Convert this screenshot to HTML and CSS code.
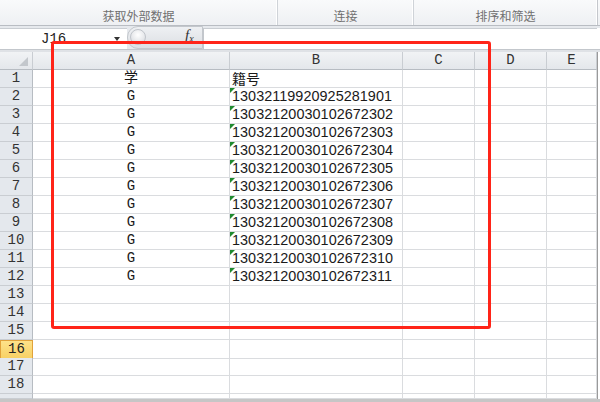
FILE: index.html
```html
<!DOCTYPE html>
<html lang="zh">
<head>
<meta charset="utf-8">
<link rel="stylesheet" href="styles.css">
</head>
<body>
<div class="app">
  <div class="ribbon">
    <div class="group g1">获取外部数据</div>
    <div class="group g2">连接</div>
    <div class="group g3">排序和筛选</div>
    <div class="group g4"></div>
  </div>
  <div class="fbar">
    <div class="namebox"><span class="ref">J16</span><span class="arrow"></span></div>
    <div class="pill"><span class="knob"></span><span class="fx">f<sub>x</sub></span></div>
    <div class="input"></div>
    <div class="fend"></div>
  </div>
  <div class="sep"></div>
  <div class="sheet">
    <div class="row head"><div class="c rh corner"><span class="tri"></span></div><div class="c ch">A</div><div class="c ch">B</div><div class="c ch">C</div><div class="c ch">D</div><div class="c ch">E</div><div class="c edge"></div></div>
    <div class="row"><div class="c rh">1</div><div class="c a">学</div><div class="c b cjk">籍号</div><div class="c"></div><div class="c"></div><div class="c"></div><div class="c edge"></div></div>
    <div class="row"><div class="c rh">2</div><div class="c a">G</div><div class="c b num">13032119920925281901</div><div class="c"></div><div class="c"></div><div class="c"></div><div class="c edge"></div></div>
    <div class="row"><div class="c rh">3</div><div class="c a">G</div><div class="c b num">13032120030102672302</div><div class="c"></div><div class="c"></div><div class="c"></div><div class="c edge"></div></div>
    <div class="row"><div class="c rh">4</div><div class="c a">G</div><div class="c b num">13032120030102672303</div><div class="c"></div><div class="c"></div><div class="c"></div><div class="c edge"></div></div>
    <div class="row"><div class="c rh">5</div><div class="c a">G</div><div class="c b num">13032120030102672304</div><div class="c"></div><div class="c"></div><div class="c"></div><div class="c edge"></div></div>
    <div class="row"><div class="c rh">6</div><div class="c a">G</div><div class="c b num">13032120030102672305</div><div class="c"></div><div class="c"></div><div class="c"></div><div class="c edge"></div></div>
    <div class="row"><div class="c rh">7</div><div class="c a">G</div><div class="c b num">13032120030102672306</div><div class="c"></div><div class="c"></div><div class="c"></div><div class="c edge"></div></div>
    <div class="row"><div class="c rh">8</div><div class="c a">G</div><div class="c b num">13032120030102672307</div><div class="c"></div><div class="c"></div><div class="c"></div><div class="c edge"></div></div>
    <div class="row"><div class="c rh">9</div><div class="c a">G</div><div class="c b num">13032120030102672308</div><div class="c"></div><div class="c"></div><div class="c"></div><div class="c edge"></div></div>
    <div class="row"><div class="c rh">10</div><div class="c a">G</div><div class="c b num">13032120030102672309</div><div class="c"></div><div class="c"></div><div class="c"></div><div class="c edge"></div></div>
    <div class="row"><div class="c rh">11</div><div class="c a">G</div><div class="c b num">13032120030102672310</div><div class="c"></div><div class="c"></div><div class="c"></div><div class="c edge"></div></div>
    <div class="row"><div class="c rh">12</div><div class="c a">G</div><div class="c b num">13032120030102672311</div><div class="c"></div><div class="c"></div><div class="c"></div><div class="c edge"></div></div>
    <div class="row"><div class="c rh">13</div><div class="c"></div><div class="c"></div><div class="c"></div><div class="c"></div><div class="c"></div><div class="c edge"></div></div>
    <div class="row"><div class="c rh">14</div><div class="c"></div><div class="c"></div><div class="c"></div><div class="c"></div><div class="c"></div><div class="c edge"></div></div>
    <div class="row"><div class="c rh">15</div><div class="c"></div><div class="c"></div><div class="c"></div><div class="c"></div><div class="c"></div><div class="c edge"></div></div>
    <div class="row"><div class="c rh sel">16</div><div class="c"></div><div class="c"></div><div class="c"></div><div class="c"></div><div class="c"></div><div class="c edge"></div></div>
    <div class="row"><div class="c rh">17</div><div class="c"></div><div class="c"></div><div class="c"></div><div class="c"></div><div class="c"></div><div class="c edge"></div></div>
    <div class="row"><div class="c rh">18</div><div class="c"></div><div class="c"></div><div class="c"></div><div class="c"></div><div class="c"></div><div class="c edge"></div></div>
    <div class="row part"><div class="c rh"></div><div class="c"></div><div class="c"></div><div class="c"></div><div class="c"></div><div class="c"></div><div class="c edge"></div></div>
  </div>
  <div class="bottombar"></div>
  <div class="highlight"></div>
</div>
</body>
</html>
```

FILE: styles.css
```css
* { box-sizing: border-box; }
html, body { margin: 0; padding: 0; background: #ffffff; }
body { width: 600px; height: 402px; overflow: hidden; font-family: "Liberation Sans", "Noto Sans CJK SC", sans-serif; }
.app { position: relative; width: 600px; height: 402px; display: flex; flex-direction: column; }

.ribbon { height: 26px; display: flex; background: linear-gradient(#f9fafb, #eef0f3); border-bottom: 1px solid #b9bdc3; }
.group { display: flex; align-items: center; justify-content: center; font-family: "Noto Sans CJK SC", sans-serif; font-size: 12px; color: #707070; border-right: 1px solid #cfd3d8; box-shadow: inset -1px 0 0 #ffffff; padding-top: 5px; }
.g1 { width: 278px; }
.g2 { width: 136px; }
.g3 { width: 184px; border-right: 1px solid #c4c7cc; }
.g4 { flex: 1; border-right: none; box-shadow: none; }

.fbar { height: 23px; display: flex; background: #e6e9ed; padding-top: 2px; }
.namebox { width: 127px; background: #ffffff; position: relative; border-top: 1px solid #c9cdd2; }
.ref { position: absolute; left: 41px; top: 2px; font-family: "Liberation Mono", monospace; font-size: 14px; color: #222; }
.arrow { position: absolute; left: 114px; top: 8px; width: 0; height: 0; border-left: 3.5px solid transparent; border-right: 3.5px solid transparent; border-top: 4px solid #333; }
.pill { width: 76px; background: linear-gradient(#eef0f3, #dcdfe3); border: 1px solid #c3c7cc; border-radius: 11px 0 0 11px; position: relative; margin-top: -2px; }
.knob { position: absolute; left: 2px; top: 2px; width: 16px; height: 16px; border-radius: 50%; background: radial-gradient(circle at 50% 35%, #ffffff, #d3d6db); border: 1px solid #c0c4ca; }
.fx { position: absolute; left: 57px; top: 0px; font-family: "Liberation Serif", serif; font-style: italic; font-size: 15px; color: #333; }
.fx sub { font-size: 10px; vertical-align: -2px; }
.input { width: 394px; background: #ffffff; border-top: 1px solid #c9cdd2; border-left: 1px solid #c3c7cc; }
.fend { flex: 1; background: #ffffff; }

.sep { height: 3px; background: #dfe2e6; border-top: 1px solid #c3c7cc; }

.sheet { display: flex; flex-direction: column; }
.row { display: grid; grid-template-columns: 33px 197px 173px 72px 72px 50px 3px; height: 18px; }
.row.part { height: 5px; }
.c { border-right: 1px solid #dadcdf; border-bottom: 1px solid #dadcdf; position: relative; white-space: nowrap; overflow: visible; line-height: 17px; font-size: 14px; color: #1a1a1a; }
.c.edge { border-right: none; border-bottom: none; background: #ffffff; box-shadow: inset 1px 0 0 #9a9a9a; }
.row.head .c.edge { box-shadow: inset 1px 0 0 #9a9a9a; }
.head .c { background: linear-gradient(#f1f3f5, #e4e7eb); border-right: 1px solid #c9cdd2; border-bottom: 1px solid #b7bcc2; text-align: center; font-family: "Liberation Mono", monospace; font-size: 14px; color: #333; }
.head .c.edge { background: #ffffff; border: none; }
.corner .tri { position: absolute; right: 4px; bottom: 3px; width: 0; height: 0; border-left: 9px solid transparent; border-bottom: 9px solid #c3c7cc; }
.rh { background: #e4e8ed; border-right: 1px solid #b7bcc2; border-bottom: 1px solid #c9cdd2; text-align: center; font-family: "Liberation Mono", monospace; font-size: 14px; color: #333; }
.rh.sel { background: linear-gradient(#fde28a, #f8d165); border: 1px solid #e1a23a; color: #222; }
.a { text-align: center; font-family: "Liberation Mono", "Noto Sans CJK SC", monospace; font-size: 14px; }
.b { padding-left: 2px; }
.cjk { font-family: "Noto Sans CJK SC", sans-serif; font-size: 14px; line-height: 17px; }
.num { font-family: "Liberation Sans", sans-serif; font-size: 14.4px; letter-spacing: 0.05px; }
.num::before { content: ""; position: absolute; left: 0; top: 0; width: 0; height: 0; border-top: 5px solid #1f8a2f; border-right: 5px solid transparent; }

.bottombar { flex: 1; background: #c6c6c6; }

.highlight { position: absolute; left: 51px; top: 41px; width: 440px; height: 288px; border: 3px solid #ff2418; border-radius: 3px; }
```
